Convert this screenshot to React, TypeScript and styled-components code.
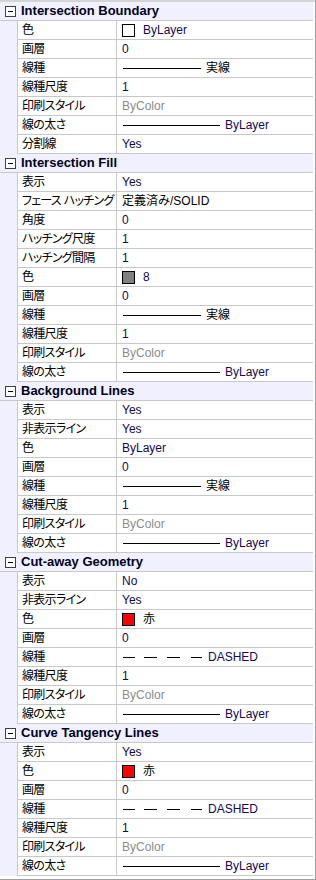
import styled, { createGlobalStyle } from 'styled-components';

const GlobalStyle = createGlobalStyle`
  html, body {
    margin: 0;
    padding: 0;
    background: #ffffff;
  }
`;

type Value =
  | { kind: 'text'; text: string; muted?: boolean; dark?: boolean }
  | { kind: 'swatch'; color: string; text: string }
  | { kind: 'line'; length: number; text: string }
  | { kind: 'dashed'; text: string };

interface PropRow {
  label: string;
  value: Value;
}

interface Section {
  title: string;
  rows: PropRow[];
}

const solid = (length: number, text: string): Value => ({ kind: 'line', length, text });
const txt = (text: string): Value => ({ kind: 'text', text });
const byColor: Value = { kind: 'text', text: 'ByColor', muted: true };
const lineWeight = solid(97, 'ByLayer');

const sections: Section[] = [
  {
    title: 'Intersection Boundary',
    rows: [
      { label: '色', value: { kind: 'swatch', color: '#ffffff', text: 'ByLayer' } },
      { label: '画層', value: txt('0') },
      { label: '線種', value: solid(78, '実線') },
      { label: '線種尺度', value: txt('1') },
      { label: '印刷スタイル', value: byColor },
      { label: '線の太さ', value: lineWeight },
      { label: '分割線', value: txt('Yes') },
    ],
  },
  {
    title: 'Intersection Fill',
    rows: [
      { label: '表示', value: txt('Yes') },
      { label: 'フェース ハッチング', value: { kind: 'text', text: '定義済み/SOLID', dark: true } },
      { label: '角度', value: txt('0') },
      { label: 'ハッチング尺度', value: txt('1') },
      { label: 'ハッチング間隔', value: txt('1') },
      { label: '色', value: { kind: 'swatch', color: '#808080', text: '8' } },
      { label: '画層', value: txt('0') },
      { label: '線種', value: solid(78, '実線') },
      { label: '線種尺度', value: txt('1') },
      { label: '印刷スタイル', value: byColor },
      { label: '線の太さ', value: lineWeight },
    ],
  },
  {
    title: 'Background Lines',
    rows: [
      { label: '表示', value: txt('Yes') },
      { label: '非表示ライン', value: txt('Yes') },
      { label: '色', value: txt('ByLayer') },
      { label: '画層', value: txt('0') },
      { label: '線種', value: solid(78, '実線') },
      { label: '線種尺度', value: txt('1') },
      { label: '印刷スタイル', value: byColor },
      { label: '線の太さ', value: lineWeight },
    ],
  },
  {
    title: 'Cut-away Geometry',
    rows: [
      { label: '表示', value: txt('No') },
      { label: '非表示ライン', value: txt('Yes') },
      { label: '色', value: { kind: 'swatch', color: '#ff0000', text: '赤' } },
      { label: '画層', value: txt('0') },
      { label: '線種', value: { kind: 'dashed', text: 'DASHED' } },
      { label: '線種尺度', value: txt('1') },
      { label: '印刷スタイル', value: byColor },
      { label: '線の太さ', value: lineWeight },
    ],
  },
  {
    title: 'Curve Tangency Lines',
    rows: [
      { label: '表示', value: txt('Yes') },
      { label: '色', value: { kind: 'swatch', color: '#ff0000', text: '赤' } },
      { label: '画層', value: txt('0') },
      { label: '線種', value: { kind: 'dashed', text: 'DASHED' } },
      { label: '線種尺度', value: txt('1') },
      { label: '印刷スタイル', value: byColor },
      { label: '線の太さ', value: lineWeight },
    ],
  },
];

const FONT = `"Liberation Sans", "Noto Sans CJK JP", sans-serif`;

const Panel = styled.div`
  width: 316px;
  height: 880px;
  box-sizing: border-box;
  border-top: 2px solid #d4d4d4;
  border-right: 1px solid #a0a0a0;
  border-bottom: 1px solid #a0a0a0;
  padding-right: 2px;
  background: #ffffff;
  font-family: ${FONT};
  font-size: 12px;
  overflow: hidden;
`;

const Grid = styled.div`
  display: flex;
  flex-direction: column;
`;

const Header = styled.div`
  display: flex;
  align-items: center;
  height: 19px;
  box-sizing: border-box;
  border-bottom: 1px solid #c8c8c8;
  background: #f0f0ff;
`;

const Toggle = styled.span`
  position: relative;
  width: 9px;
  height: 9px;
  margin: 0 5px 0 5px;
  border: 1px solid #404040;
  background: #ffffff;
  flex: none;

  &::after {
    content: '';
    position: absolute;
    left: 2px;
    top: 4px;
    width: 5px;
    height: 1px;
    background: #000000;
  }
`;

const HeaderTitle = styled.span`
  font-weight: bold;
  font-size: 13px;
  color: #000020;
  line-height: 18px;
`;

const Row = styled.div`
  display: grid;
  grid-template-columns: 17px 99px 1fr;
  height: 19px;
`;

const Gutter = styled.div`
  background: #f0f0ff;
`;

const Cell = styled.div`
  display: flex;
  align-items: center;
  box-sizing: border-box;
  border-left: 1px solid #c8c8c8;
  border-bottom: 1px solid #c8c8c8;
  padding-left: 4px;
  white-space: nowrap;
  overflow: hidden;
  line-height: 18px;
`;

const Label = styled(Cell)`
  color: #000000;
  font-feature-settings: 'palt';
  letter-spacing: -0.7px;
`;

const ValueCell = styled(Cell)<{ $tone: 'value' | 'muted' | 'dark' }>`
  color: ${(p) => (p.$tone === 'muted' ? '#8c8c8c' : p.$tone === 'dark' ? '#000000' : '#14084e')};
  padding-left: 5px;
`;

const Swatch = styled.span<{ $color: string }>`
  width: 11px;
  height: 11px;
  border: 1px solid #000000;
  background: ${(p) => p.$color};
  margin-right: 8px;
  flex: none;
`;

const LineText = styled.span`
  margin-left: 5px;
`;

const Solid = styled.span<{ $length: number }>`
  width: ${(p) => p.$length}px;
  height: 1px;
  background: #000000;
  margin-left: 1px;
  flex: none;
`;

const Dashed = () => (
  <svg width="80" height="3" viewBox="0 0 80 3" style={{ marginLeft: 1, flex: 'none' }}>
    <g stroke="#000" strokeWidth="1">
      <line x1="0" y1="1.5" x2="12" y2="1.5" />
      <line x1="21" y1="1.5" x2="34" y2="1.5" />
      <line x1="44" y1="1.5" x2="57" y2="1.5" />
      <line x1="68" y1="1.5" x2="79" y2="1.5" />
    </g>
  </svg>
);

const isKanji = (s: string) => /[一-龥]/.test(s);

const renderValue = (v: Value) => {
  switch (v.kind) {
    case 'text':
      return (
        <ValueCell $tone={v.muted ? 'muted' : v.dark ? 'dark' : 'value'}>{v.text}</ValueCell>
      );
    case 'swatch':
      return (
        <ValueCell $tone={isKanji(v.text) ? 'dark' : 'value'}>
          <Swatch $color={v.color} />
          {v.text}
        </ValueCell>
      );
    case 'line':
      return (
        <ValueCell $tone={isKanji(v.text) ? 'dark' : 'value'}>
          <Solid $length={v.length} />
          <LineText>{v.text}</LineText>
        </ValueCell>
      );
    case 'dashed':
      return (
        <ValueCell $tone="value">
          <Dashed />
          <LineText>{v.text}</LineText>
        </ValueCell>
      );
  }
};

export default function App() {
  return (
    <>
      <GlobalStyle />
      <Panel>
        <Grid>
          {sections.map((s) => (
            <div key={s.title}>
              <Header>
                <Toggle />
                <HeaderTitle>{s.title}</HeaderTitle>
              </Header>
              {s.rows.map((r, i) => (
                <Row key={i}>
                  <Gutter />
                  <Label>{r.label}</Label>
                  {renderValue(r.value)}
                </Row>
              ))}
            </div>
          ))}
        </Grid>
      </Panel>
    </>
  );
}
